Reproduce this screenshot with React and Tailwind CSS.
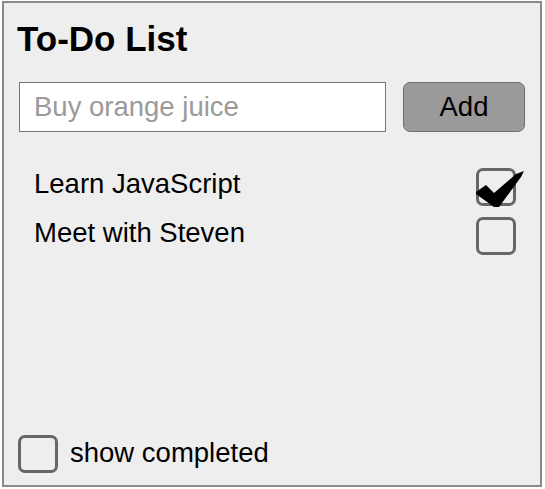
import React, { useState } from "react";

const font = { fontFamily: '"Liberation Sans", Arial, sans-serif' };

function CheckBox({ checked }) {
  return (
    <div className="relative w-[40px] h-[38px] shrink-0 rounded-[7px] border-[3px] border-[#666666]">
      {checked && (
        <svg
          className="absolute -left-[4px] -top-[4px] w-[52px] h-[44px] overflow-visible"
          viewBox="-4 -4 52 44"
        >
          <polygon
            points="-3,21 7,14 15,22 37,3 45,0 42,6 20,36 15,36 -3,23"
            fill="#000"
          />
        </svg>
      )}
    </div>
  );
}

export default function App() {
  const [todos] = useState([
    { id: 1, text: "Learn JavaScript", done: true },
    { id: 2, text: "Meet with Steven", done: false },
  ]);

  return (
    <div className="w-[545px] h-[489px] bg-white pl-[2px] pt-[1px]" style={font}>
      <div className="w-[540px] h-[486px] bg-[#eeeeee] border-2 border-[#8a8a8a] flex flex-col px-[15px] pt-[19px] pb-[12px]">
        <h1 className="text-[35px] leading-[34px] font-bold text-black -ml-[2px]">To-Do List</h1>

        <div className="flex gap-[17px] mt-[26px]">
          <input
            className="w-[367px] h-[50px] bg-white border-[1.5px] border-[#777777] px-[14px] text-[27.5px] text-black placeholder:text-[#9a9a9a] outline-none"
            placeholder="Buy orange juice"
          />
          <button className="w-[123px] h-[50px] bg-[#9a9a9a] border-[1.5px] border-[#6e6e6e] rounded-[7px] text-[27.5px] text-black">
            Add
          </button>
        </div>

        <ul className="mt-[31px] pl-[15px] pr-[9px]">
          {todos.map((t) => (
            <li key={t.id} className="flex items-center justify-between h-[48.5px]">
              <span className="text-[27.5px] leading-[32px] text-black pb-[6px]">{t.text}</span>
              <CheckBox checked={t.done} />
            </li>
          ))}
        </ul>

        <label className="mt-auto flex items-center gap-[12px] -ml-[1px]">
          <CheckBox checked={false} />
          <span className="text-[27.5px] leading-[32px] text-black pb-[2px]">show completed</span>
        </label>
      </div>
    </div>
  );
}
